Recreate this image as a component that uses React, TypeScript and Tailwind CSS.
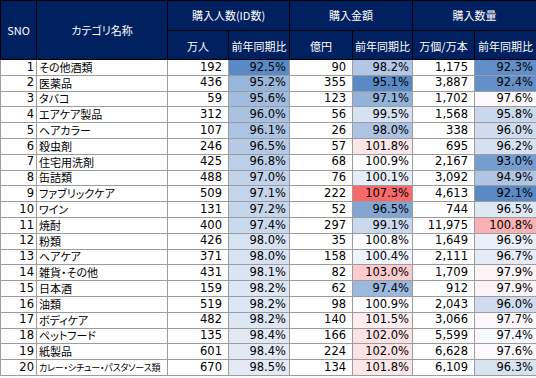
import React from "react";

type Row = [number, string, number, number, number, number, string, number];

const rows: Row[] = [
  [1, "その他酒類", 192, 92.5, 90, 98.2, "1,175", 92.3],
  [2, "医薬品", 436, 95.2, 355, 95.1, "3,887", 92.4],
  [3, "タバコ", 59, 95.6, 123, 97.1, "1,702", 97.6],
  [4, "エアケア製品", 312, 96.0, 56, 99.5, "1,568", 95.8],
  [5, "ヘアカラー", 107, 96.1, 26, 98.0, "338", 96.0],
  [6, "殺虫剤", 246, 96.5, 57, 101.8, "695", 96.2],
  [7, "住宅用洗剤", 425, 96.8, 68, 100.9, "2,167", 93.0],
  [8, "缶詰類", 488, 97.0, 76, 100.1, "3,092", 94.9],
  [9, "ファブリックケア", 509, 97.1, 222, 107.3, "4,613", 92.1],
  [10, "ワイン", 131, 97.2, 52, 96.5, "744", 96.5],
  [11, "焼酎", 400, 97.4, 297, 99.1, "11,975", 100.8],
  [12, "粉類", 426, 98.0, 35, 100.8, "1,649", 96.9],
  [13, "ヘアケア", 371, 98.0, 158, 100.4, "2,111", 96.7],
  [14, "雑貨・その他", 431, 98.1, 82, 103.0, "1,709", 97.9],
  [15, "日本酒", 159, 98.2, 62, 97.4, "912", 97.9],
  [16, "油類", 519, 98.2, 98, 100.9, "2,043", 96.0],
  [17, "ボディケア", 482, 98.2, 140, 101.5, "3,066", 97.7],
  [18, "ペットフード", 135, 98.4, 166, 102.0, "5,599", 97.4],
  [19, "紙製品", 601, 98.4, 224, 102.0, "6,628", 97.6],
  [20, "カレー・シチュー・パスタソース類", 670, 98.5, 134, 101.8, "6,109", 96.3],
];

// excel風 3色スケール (青 - 白 - 赤)
const BLUE = [90, 138, 198];
const WHITE = [252, 252, 255];
const RED = [248, 105, 107];

function scaleColor(v: number, min: number, mid: number, max: number) {
  let t: number;
  let to: number[];
  if (v <= mid) {
    t = Math.min(1, (mid - v) / (mid - min));
    to = BLUE;
  } else {
    t = Math.min(1, (v - mid) / (max - mid));
    to = RED;
  }
  const c = WHITE.map((w, i) => Math.round(w + (to[i] - w) * t));
  return `rgb(${c[0]},${c[1]},${c[2]})`;
}

const jp = "font-['Noto_Sans_CJK_JP',sans-serif] [font-feature-settings:'palt']";
const num = "font-['DejaVu_Sans','Noto_Sans_CJK_JP',sans-serif] text-[11.5px]";

const th = `border border-black bg-[#002060] text-white font-normal text-[11px] leading-none ${jp}`;
const td = "border border-[#9c9c9c] h-[15.8px] p-0 leading-none whitespace-nowrap";

function App() {
  return (
    <div className="w-[536px] h-[378px] bg-white overflow-hidden">
      <table className="w-[536px] table-fixed border-collapse text-black">
        <colgroup>
          <col className="w-[36px]" />
          <col className="w-[131px]" />
          <col className="w-[61px]" />
          <col className="w-[61px]" />
          <col className="w-[63px]" />
          <col className="w-[60px]" />
          <col className="w-[62px]" />
          <col className="w-[62px]" />
        </colgroup>
        <thead>
          <tr className="h-[30px]">
            <th rowSpan={2} className={`${th} font-['DejaVu_Sans',sans-serif] text-[11.5px]`}>
              SNO
            </th>
            <th rowSpan={2} className={th}>
              カテゴリ名称
            </th>
            <th colSpan={2} className={th}>
              購入人数(ID数)
            </th>
            <th colSpan={2} className={th}>
              購入金額
            </th>
            <th colSpan={2} className={th}>
              購入数量
            </th>
          </tr>
          <tr className="h-[29px]">
            <th className={`${th} pt-[3px]`}>万人</th>
            <th className={`${th} pt-[3px]`}>前年同期比</th>
            <th className={`${th} pt-[3px]`}>億円</th>
            <th className={`${th} pt-[3px]`}>前年同期比</th>
            <th className={`${th} pt-[3px]`}>万個/万本</th>
            <th className={`${th} pt-[3px]`}>前年同期比</th>
          </tr>
        </thead>
        <tbody>
          {rows.map((r) => (
            <tr key={r[0]}>
              <td className={`${td} ${num} text-right pr-[2px]`}>{r[0]}</td>
              <td
                className={`${td} ${jp} text-left pl-[2px] overflow-hidden ${
                  r[1].length > 12 ? "text-[9px] tracking-[-0.2px]" : "text-[11px]"
                }`}
              >
                {r[1]}
              </td>
              <td className={`${td} ${num} text-right pr-[6px]`}>{r[2]}</td>
              <td
                className={`${td} ${num} text-right pr-[3px]`}
                style={{ backgroundColor: scaleColor(r[3], 92.5, 99.6, 110) }}
              >
                {r[3].toFixed(1)}%
              </td>
              <td className={`${td} ${num} text-right pr-[6px]`}>{r[4]}</td>
              <td
                className={`${td} ${num} text-right pr-[3px]`}
                style={{ backgroundColor: scaleColor(r[5], 95.1, 100.85, 107.3) }}
              >
                {r[5].toFixed(1)}%
              </td>
              <td className={`${td} ${num} text-right pr-[6px]`}>{r[6]}</td>
              <td
                className={`${td} ${num} text-right pr-[3px]`}
                style={{ backgroundColor: scaleColor(r[7], 92.1, 97.5, 104) }}
              >
                {r[7].toFixed(1)}%
              </td>
            </tr>
          ))}
        </tbody>
      </table>
    </div>
  );
}

export default App;
